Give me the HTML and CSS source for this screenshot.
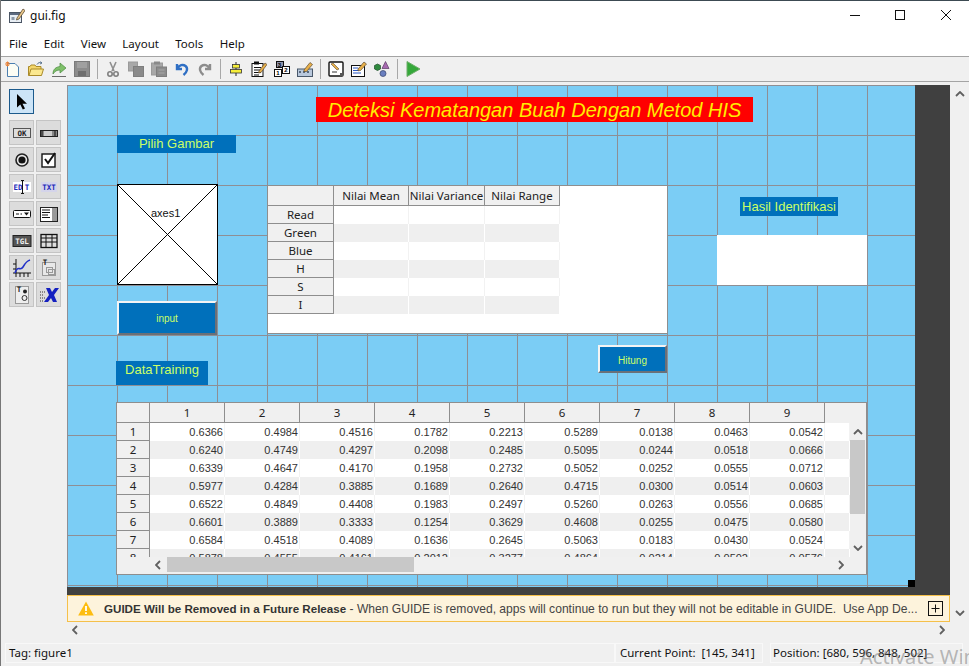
FILE: index.html
```html
<!DOCTYPE html>
<html>
<head>
    <title>gui.fig</title>
    <meta http-equiv="Content-Type" content="text/html; charset=utf-8" />
    <link rel="stylesheet" href="styles.css">
</head>

<body>
<div class="window">
    <!-- Title bar -->
    <div class="titlebar">
        <svg class="app-icon" viewBox="0 0 16 16" width="16" height="16">
            <rect x="0.5" y="4.5" width="12" height="10" fill="#e8eef4" stroke="#4a5564"/>
            <rect x="1" y="5" width="11" height="2" fill="#5c6a80"/>
            <rect x="2.5" y="9" width="3" height="3" fill="#8a98a8"/>
            <path d="M8 10 L14 1 L16 2.5 L10 11 L7.5 12 Z" fill="#e9c78a" stroke="#5b4a32" stroke-width="0.8"/>
        </svg>
        <span class="title-text">gui.fig</span>
        <div class="win-controls">
            <svg viewBox="0 0 10 10" width="10" height="10" class="win-min"><path d="M0 5.5H10" stroke="#111" fill="none"/></svg>
            <svg viewBox="0 0 10 10" width="10" height="10" class="win-max"><rect x="0.5" y="0.5" width="9" height="9" stroke="#111" fill="none"/></svg>
            <svg viewBox="0 0 10 10" width="10" height="10" class="win-close"><path d="M0 0L10 10M10 0L0 10" stroke="#111" fill="none"/></svg>
        </div>
    </div>

    <!-- Menu -->
    <div class="menubar">
        <span>File</span>
        <span>Edit</span>
        <span>View</span>
        <span>Layout</span>
        <span>Tools</span>
        <span>Help</span>
    </div>

    <!-- Toolbar -->
    <div class="toolbar">
        <span class="tool"><svg viewBox="0 0 16 16"><path d="M2.5 2.5H10L13.5 6V15.5H2.5Z" fill="#fdfdf4" stroke="#4c7fb0"/><path d="M0 3H5M2.5 0.5V5.5M1 1L4 5M4 1L1 5" stroke="#e8833a"/></svg></span>
        <span class="tool"><svg viewBox="0 0 16 16"><path d="M0.5 14.5V5.5H2L3 4H7L8 5.5H13V14.5Z" fill="#f4d66a" stroke="#a98a2a"/><path d="M1 14.5L3 8H15.5L13.5 14.5Z" fill="#fbe88f" stroke="#a98a2a"/><path d="M9 3.5C10 1.5 12 1 14 2M14 2L12.5 0.5M14 2L12 3" stroke="#5c7590" fill="none"/></svg></span>
        <span class="tool"><svg viewBox="0 0 16 16"><path d="M1 15.5H15" stroke="#6a6a6a"/><path d="M2 13C2 8 5 6 9 5.5V2L15 7L9 12V9C6 9 4 10 2 13Z" fill="#7fc06a" stroke="#4b8a40" stroke-width="0.7"/></svg></span>
        <span class="tool"><svg viewBox="0 0 16 16"><rect x="0.5" y="0.5" width="15" height="15" fill="#8c8c8c" stroke="#7a7a7a"/><rect x="3" y="1" width="10" height="6" fill="#a0a0a0"/><rect x="4" y="10" width="8" height="5" fill="#6e6e6e"/></svg></span>
        <span class="tool-sep"></span>
        <span class="tool"><svg viewBox="0 0 16 16"><path d="M5 1L9 10M11 1L7 10" stroke="#8f8f8f" stroke-width="1.6" fill="none"/><circle cx="5" cy="13" r="2.2" fill="none" stroke="#808080" stroke-width="1.6"/><circle cx="11" cy="13" r="2.2" fill="none" stroke="#808080" stroke-width="1.6"/></svg></span>
        <span class="tool"><svg viewBox="0 0 16 16"><rect x="0.5" y="1" width="9" height="9" fill="#a8a8a8" stroke="#9a9a9a"/><rect x="5.5" y="5.5" width="10" height="10" fill="#8a8a8a" stroke="#7e7e7e"/></svg></span>
        <span class="tool"><svg viewBox="0 0 16 16"><rect x="0.5" y="2" width="11" height="12" fill="#a8a8a8" stroke="#9a9a9a"/><rect x="3" y="0.5" width="6" height="3" fill="#8a8a8a"/><rect x="5.5" y="6" width="10" height="9.5" fill="#8c8c8c" stroke="#7e7e7e"/><path d="M7.5 9H13.5M7.5 12H13.5" stroke="#a8a8a8"/></svg></span>
        <span class="tool"><svg viewBox="0 0 16 16"><path d="M3 3V8H8M3.5 7.5C5 4 9 3 11.5 5C14 7 13.5 11 9.5 14" fill="none" stroke="#2f6fc4" stroke-width="2.4"/></svg></span>
        <span class="tool"><svg viewBox="0 0 16 16"><path d="M13 3V8H8M12.5 7.5C11 4 7 3 4.5 5C2 7 2.5 11 6.5 14" fill="none" stroke="#8c8c8c" stroke-width="2.4"/></svg></span>
        <span class="tool-sep"></span>
        <span class="tool"><svg viewBox="0 0 16 16"><path d="M8 1V15" stroke="#222"/><rect x="4.5" y="3.5" width="7" height="3.5" fill="#f6ee3a" stroke="#333" stroke-width="0.8"/><rect x="2.5" y="8.5" width="11" height="3.5" fill="#f6ee3a" stroke="#333" stroke-width="0.8"/></svg></span>
        <span class="tool"><svg viewBox="0 0 16 16"><rect x="1" y="2.5" width="11" height="13" fill="#fff" stroke="#111"/><rect x="3" y="0.5" width="5" height="3" fill="#111"/><path d="M3 6.5H10M3 9H10M3 11.5H10M3 14H8" stroke="#111"/><path d="M8 10L14 2L16 3.5L10 11.5L7.5 12Z" fill="#e8b04a" stroke="#5b4a32" stroke-width="0.7"/></svg></span>
        <span class="tool"><svg viewBox="0 0 16 16"><rect x="2.5" y="0.5" width="7" height="6" fill="#8c93ad" stroke="#111"/><rect x="0.5" y="8.5" width="7" height="7" fill="#fff" stroke="#111"/><rect x="8.5" y="5.5" width="7" height="7" fill="#fff" stroke="#111"/><text x="4" y="14.3" class="tiny">1</text><text x="12" y="11.3" class="tiny">2</text><text x="5.5" y="5.8" class="tiny">3</text></svg></span>
        <span class="tool"><svg viewBox="0 0 16 16"><rect x="0.5" y="8" width="15" height="7.5" fill="#b9c8dc" stroke="#49586a"/><path d="M2 11H4M6 11H8M10 11H12" stroke="#3a4a5c" stroke-width="1.6"/><path d="M7 9L13 1.5L15.5 3.5L9.5 10.5L7 10.5Z" fill="#e8b04a" stroke="#5b4a32" stroke-width="0.7"/></svg></span>
        <span class="tool-sep"></span>
        <span class="tool"><svg viewBox="0 0 16 16"><rect x="1" y="1" width="14" height="14" rx="1" fill="#fff" stroke="#111" stroke-width="1.4"/><path d="M3 3L9 9L11 8L5 2Z" fill="#e8b04a" stroke="#5b4a32" stroke-width="0.6"/><path d="M4 11H9" stroke="#333"/><rect x="12" y="12" width="3" height="3" fill="#555"/></svg></span>
        <span class="tool"><svg viewBox="0 0 16 16"><rect x="0.5" y="4.5" width="13" height="11" fill="#fff" stroke="#111"/><path d="M2 7H7M2 9.5H8M2 12H10" stroke="#2b58c4"/><path d="M7 8L13 1L15.5 3L9.5 9.5L7 9.8Z" fill="#e8b04a" stroke="#5b4a32" stroke-width="0.7"/></svg></span>
        <span class="tool"><svg viewBox="0 0 16 16"><path d="M3.5 3L6.5 4.5V8L3.5 9.5L0.5 8V4.5Z" fill="#2f8a3e" stroke="#1e4d28" stroke-width="0.7"/><path d="M11.5 0.5L15 7.5H8Z" fill="#a669b0" stroke="#5c3a66" stroke-width="0.7"/><circle cx="9" cy="12.5" r="3" fill="#6a7fc0" stroke="#36436a" stroke-width="0.7"/></svg></span>
        <span class="tool-sep"></span>
        <span class="tool"><svg viewBox="0 0 16 16"><path d="M2 0.5L15 8L2 15.5Z" fill="#35a83a" stroke="#6fae6a"/></svg></span>
    </div>

    <div class="workspace">
        <!-- Component palette -->
        <div class="palette">
            <div class="pal-select">
                <svg viewBox="0 0 16 18" width="16" height="18"><path d="M3 1V14.5L6.3 11.5L8.8 16.5L11 15.5L8.5 10.8H13Z" fill="#000"/></svg>
            </div>
            <div class="pal-grid">
                <span class="pal-btn"><svg viewBox="0 0 20 20"><rect x="1.5" y="5.5" width="17" height="9" fill="#ddd" stroke="#555"/><text x="10" y="13" class="pal-text">OK</text></svg></span>
                <span class="pal-btn"><svg viewBox="0 0 20 20"><rect x="1.5" y="7.5" width="17" height="6" fill="#888" stroke="#222"/><rect x="5" y="8" width="8" height="5" fill="#ccc"/><path d="M3 8V13M16 8V13" stroke="#111"/></svg></span>
                <span class="pal-btn"><svg viewBox="0 0 20 20"><circle cx="10" cy="10" r="6" fill="#e8e8e8" stroke="#222" stroke-width="1.6"/><circle cx="10" cy="10" r="3.6" fill="#111"/></svg></span>
                <span class="pal-btn"><svg viewBox="0 0 20 20"><rect x="3" y="4" width="13" height="13" fill="#fff" stroke="#111" stroke-width="1.4"/><path d="M6 9L9 13L16 3" fill="none" stroke="#111" stroke-width="2"/></svg></span>
                <span class="pal-btn"><svg viewBox="0 0 20 20"><rect x="1" y="5" width="18" height="10" fill="#fff"/><text x="6" y="13" class="pal-text blue">ED</text><text x="15" y="13" class="pal-text blue">T</text><path d="M10.5 3.5V16.5M9 3.5H12M9 16.5H12" stroke="#111"/></svg></span>
                <span class="pal-btn"><svg viewBox="0 0 20 20"><rect x="2" y="5" width="16" height="10" fill="#d4d4ea"/><text x="10" y="13" class="pal-text blue">TXT</text></svg></span>
                <span class="pal-btn"><svg viewBox="0 0 20 20"><rect x="1.5" y="6.5" width="17" height="7" rx="1" fill="#fff" stroke="#111"/><path d="M4 10H7M8.5 10H10" stroke="#111"/><path d="M12 8.5H17L14.5 11.5Z" fill="#111"/></svg></span>
                <span class="pal-btn"><svg viewBox="0 0 20 20"><rect x="1.5" y="3.5" width="17" height="14" fill="#fff" stroke="#222"/><path d="M3 6H11M3 8.5H11M3 11H9M3 13.5H11" stroke="#111"/><rect x="13" y="4" width="5" height="13" fill="#999"/></svg></span>
                <span class="pal-btn"><svg viewBox="0 0 20 20"><rect x="1" y="4.5" width="18" height="11" fill="#555" stroke="#222"/><text x="10" y="13" class="pal-text light">TGL</text></svg></span>
                <span class="pal-btn"><svg viewBox="0 0 20 20"><rect x="2" y="3.5" width="16" height="13" fill="#ddd" stroke="#111" stroke-width="1.3"/><path d="M2 7H18M2 11H18M7 3.5V16.5M13 3.5V16.5" stroke="#111"/></svg></span>
                <span class="pal-btn"><svg viewBox="0 0 20 20"><path d="M4 1V19M1 15H19M1 11H4M1 6H4M8 15V19M12 15V19M16 15V19" stroke="#111"/><path d="M3 15C6 6 8 14 11 9S15 3 18 2" fill="none" stroke="#2230c8" stroke-width="1.6"/></svg></span>
                <span class="pal-btn"><svg viewBox="0 0 20 20"><rect x="3.5" y="4.5" width="13" height="13" fill="#e8e8e8" stroke="#999"/><text x="6" y="7" class="pal-text">T</text><rect x="7.5" y="9.5" width="6" height="5" fill="none" stroke="#999"/><rect x="9.5" y="11.5" width="6" height="5" fill="none" stroke="#999"/></svg></span>
                <span class="pal-btn"><svg viewBox="0 0 20 20"><rect x="3.5" y="1.5" width="13" height="17" fill="#eee" stroke="#999"/><text x="7" y="7" class="pal-text">T</text><circle cx="13" cy="6.5" r="2" fill="#222"/><circle cx="12.5" cy="13" r="2.5" fill="#eee" stroke="#333"/></svg></span>
                <span class="pal-btn"><svg viewBox="0 0 20 20"><path d="M1 7H6M1 10H5M1 13H6M1 16H5" stroke="#333" stroke-dasharray="1 1"/><path d="M7 3H11L13 7L16 3H20L15 10L18 17H14L12 13L9 17H5L10 10Z" fill="#1420c0"/></svg></span>
            </div>
        </div>

        <!-- Layout editor -->
        <div class="editor">
            <div class="design-area">
                <div class="design-back">
                    <div class="canvas">
                        <div class="w-title">Deteksi Kematangan Buah Dengan Metod HIS</div>
                        <div class="w-label w-pilih">Pilih Gambar</div>

                        <div class="w-axes">
                            <svg viewBox="0 0 100 100" preserveAspectRatio="none"><path d="M0 0L100 100M100 0L0 100" stroke="#000" stroke-width="1" fill="none"/></svg>
                            <span class="axes-name">axes1</span>
                        </div>

                        <div class="w-button w-input">input</div>

                        <div class="w-table-small">
                            <table class="sheet small-sheet">
                                <colgroup><col class="c-rowhead"><col class="c-col"><col class="c-wide"><col class="c-col"></colgroup>
                                <tr><th class="corner"></th><th>Nilai Mean</th><th>Nilai Variance</th><th>Nilai Range</th></tr>
                                <tr><th>Read</th><td></td><td></td><td></td></tr>
                                <tr><th>Green</th><td></td><td></td><td></td></tr>
                                <tr><th>Blue</th><td></td><td></td><td></td></tr>
                                <tr><th>H</th><td></td><td></td><td></td></tr>
                                <tr><th>S</th><td></td><td></td><td></td></tr>
                                <tr><th>I</th><td></td><td></td><td></td></tr>
                            </table>
                        </div>

                        <div class="w-label w-hasil">Hasil Identifikasi</div>
                        <div class="w-result"></div>
                        <div class="w-label w-datatraining">DataTraining</div>
                        <div class="w-button w-hitung">Hitung</div>

                        <div class="w-table-data">
                            <div class="data-view">
                                <table class="sheet data-sheet">
                                    <colgroup><col class="c-num"><col class="c-col"><col class="c-col"><col class="c-col"><col class="c-col"><col class="c-col"><col class="c-col"><col class="c-col"><col class="c-col"><col class="c-col"><col class="c-fill"></colgroup>
                                    <tr><th class="corner"></th><th>1</th><th>2</th><th>3</th><th>4</th><th>5</th><th>6</th><th>7</th><th>8</th><th>9</th><th class="fill"></th></tr>
                                    <tr><th>1</th><td>0.6366</td><td>0.4984</td><td>0.4516</td><td>0.1782</td><td>0.2213</td><td>0.5289</td><td>0.0138</td><td>0.0463</td><td>0.0542</td><td></td></tr>
                                    <tr><th>2</th><td>0.6240</td><td>0.4749</td><td>0.4297</td><td>0.2098</td><td>0.2485</td><td>0.5095</td><td>0.0244</td><td>0.0518</td><td>0.0666</td><td></td></tr>
                                    <tr><th>3</th><td>0.6339</td><td>0.4647</td><td>0.4170</td><td>0.1958</td><td>0.2732</td><td>0.5052</td><td>0.0252</td><td>0.0555</td><td>0.0712</td><td></td></tr>
                                    <tr><th>4</th><td>0.5977</td><td>0.4284</td><td>0.3885</td><td>0.1689</td><td>0.2640</td><td>0.4715</td><td>0.0300</td><td>0.0514</td><td>0.0603</td><td></td></tr>
                                    <tr><th>5</th><td>0.6522</td><td>0.4849</td><td>0.4408</td><td>0.1983</td><td>0.2497</td><td>0.5260</td><td>0.0263</td><td>0.0556</td><td>0.0685</td><td></td></tr>
                                    <tr><th>6</th><td>0.6601</td><td>0.3889</td><td>0.3333</td><td>0.1254</td><td>0.3629</td><td>0.4608</td><td>0.0255</td><td>0.0475</td><td>0.0580</td><td></td></tr>
                                    <tr><th>7</th><td>0.6584</td><td>0.4518</td><td>0.4089</td><td>0.1636</td><td>0.2645</td><td>0.5063</td><td>0.0183</td><td>0.0430</td><td>0.0524</td><td></td></tr>
                                    <tr><th>8</th><td>0.5878</td><td>0.4555</td><td>0.4161</td><td>0.2012</td><td>0.3277</td><td>0.4864</td><td>0.0214</td><td>0.0502</td><td>0.0576</td><td></td></tr>
                                </table>
                            </div>
                            <div class="data-vscroll">
                                <svg class="chev up" viewBox="0 0 10 6"><path d="M1 5L5 1L9 5"/></svg>
                                <div class="v-thumb"></div>
                                <svg class="chev down" viewBox="0 0 10 6"><path d="M1 1L5 5L9 1"/></svg>
                            </div>
                            <div class="data-hscroll">
                                <svg class="chev-h left" viewBox="0 0 6 10"><path d="M5 1L1 5L5 9"/></svg>
                                <div class="h-thumb"></div>
                                <svg class="chev-h right" viewBox="0 0 6 10"><path d="M1 1L5 5L1 9"/></svg>
                            </div>
                        </div>

                        <span class="resize-handle"></span>
                    </div>
                </div>
            </div>

            <!-- Warning banner -->
            <div class="banner">
                <svg class="warn-icon" viewBox="0 0 16 15" width="16" height="15"><path d="M8 0.5L15.8 14.5H0.2Z" fill="#fdbd10"/><path d="M8 5V10M8 11.3V13" stroke="#fff" stroke-width="1.8"/></svg>
                <span class="banner-text"><b>GUIDE Will be Removed in a Future Release</b> - When GUIDE is removed, apps will continue to run but they will not be editable in GUIDE.&nbsp; Use App De...</span>
                <span class="banner-plus">
                    <svg viewBox="0 0 15 15" width="15" height="15"><rect x="0.5" y="0.5" width="14" height="14" fill="none" stroke="#111"/><path d="M3.5 7.5H11.5M7.5 3.5V11.5" stroke="#111"/></svg>
                </span>
            </div>
            <div class="hscroll-row">
                <svg class="chev-h" viewBox="0 0 6 10"><path d="M5 1L1 5L5 9"/></svg>
                <svg class="chev-h" viewBox="0 0 6 10"><path d="M1 1L5 5L1 9"/></svg>
            </div>
        </div>

        <div class="side-scroll">
            <svg class="chev" viewBox="0 0 10 6"><path d="M1 5L5 1L9 5"/></svg>
            <svg class="chev" viewBox="0 0 10 6"><path d="M1 1L5 5L9 1"/></svg>
        </div>
    </div>

    <!-- Status bar -->
    <div class="statusbar">
        <span class="st-panel st-tag">Tag: figure1</span>
        <span class="st-panel st-point">Current Point:&nbsp; [145, 341]</span>
        <span class="st-panel st-pos">Position: [680, 596, 848, 502]</span>
    </div>
    <span class="watermark">Activate Win</span>
</div>
</body>

</html>
```

FILE: styles.css
```css
html, body {
    margin: 0;
    padding: 0;
    height: 666px;
    overflow: hidden;
}

body {
    background-color: #f0f0f0;
    color: #111;
    font-family: "Noto Sans", "Liberation Sans", sans-serif;
    font-size: 11.5px;
}

svg {
    display: block;
}

.window {
    position: relative;
    width: 969px;
    height: 666px;
    overflow: hidden;
    box-sizing: border-box;
    border-left: 1px solid #777;
    display: flex;
    flex-direction: column;
}

/* title bar */
.titlebar {
    height: 29px;
    flex: none;
    background-color: #fff;
    border-top: 1px solid #3c4a52;
    display: flex;
    align-items: center;
    padding-left: 8px;
}

.app-icon {
    margin-right: 5px;
}

.title-text {
    font-size: 12px;
}

.win-controls {
    margin-left: auto;
    display: flex;
    align-items: center;
    margin-right: 18px;
    margin-top: -1px;
}

.win-min {
    margin-right: 35px;
}

.win-max {
    margin-right: 36px;
}

/* menu */
.menubar {
    height: 26px;
    flex: none;
    background-color: #fff;
    border-bottom: 1px solid #a4a4a4;
    display: flex;
    align-items: center;
    gap: 16.4px;
    padding-left: 8px;
    font-size: 11.5px;
}

/* toolbar */
.toolbar {
    height: 24px;
    flex: none;
    background-color: #f0f0f0;
    border-bottom: 1px solid #a4a4a4;
    display: flex;
    align-items: center;
}

.tool {
    width: 23px;
    display: flex;
    justify-content: center;
}

.tool svg {
    width: 16px;
    height: 16px;
}

.tool-sep {
    width: 1px;
    height: 20px;
    margin: 0 3px 0 4px;
    background-color: #a8a8a8;
}

.tiny {
    font-family: "Liberation Sans", sans-serif;
    font-size: 6px;
    text-anchor: middle;
    font-weight: bold;
}

.workspace {
    height: 560px;
    flex: none;
    display: flex;
}

/* palette */
.palette {
    width: 66px;
    flex: none;
    padding: 7px 0 0 8px;
    box-sizing: border-box;
}

.pal-select {
    width: 25px;
    height: 25px;
    box-sizing: border-box;
    border: 1px solid #1c5a8c;
    background-color: #cce4f7;
    display: flex;
    align-items: center;
    justify-content: center;
}

.pal-grid {
    margin-top: 6px;
    display: grid;
    grid-template-columns: 25px 25px;
    grid-auto-rows: 25px;
    gap: 2px;
}

.pal-btn {
    box-sizing: border-box;
    border: 1px solid #c4c4c4;
    background-color: #dcdcdc;
    display: flex;
    align-items: center;
    justify-content: center;
}

.pal-btn svg {
    width: 20px;
    height: 20px;
}

.pal-text {
    font-family: "DejaVu Sans Mono", monospace;
    font-size: 7.5px;
    font-weight: bold;
    text-anchor: middle;
    fill: #222;
}

.pal-text.blue {
    fill: #2228b8;
}

.pal-text.light {
    fill: #eee;
}

/* editor area */
.editor {
    width: 883px;
    flex: none;
    display: flex;
    flex-direction: column;
}

.design-area {
    height: 513px;
    flex: none;
    box-sizing: border-box;
    padding-top: 3px;
}

.design-back {
    height: 510px;
    background-color: #404040;
}

.canvas {
    position: relative;
    width: 848px;
    height: 502px;
    background-color: #7bcdf5;
    background-image:
        linear-gradient(to right, #8e8e94 1px, transparent 1px),
        linear-gradient(to bottom, #8e8e94 1px, transparent 1px);
    background-size: 50px 50px;
    font-family: "Liberation Sans", sans-serif;
}

.w-title {
    position: absolute;
    left: 249px;
    top: 12px;
    width: 437px;
    height: 25px;
    line-height: 27px;
    background-color: #ff0000;
    color: #ffee00;
    font-size: 20px;
    font-style: italic;
    text-align: center;
}

.w-label {
    position: absolute;
    background-color: #0070bb;
    color: #ccff66;
    text-align: center;
}

.w-pilih {
    left: 50px;
    top: 50px;
    width: 119px;
    height: 18px;
    line-height: 18px;
    font-size: 13px;
}

.w-hasil {
    left: 673px;
    top: 112px;
    width: 98px;
    height: 19px;
    line-height: 19px;
    font-size: 13px;
}

.w-datatraining {
    left: 49px;
    top: 276px;
    width: 92px;
    height: 24px;
    line-height: 18px;
    font-size: 13px;
}

.w-axes {
    position: absolute;
    left: 50px;
    top: 99px;
    width: 99px;
    height: 99px;
    background-color: #fff;
    border: 1px solid #000;
}

.w-axes svg {
    width: 100%;
    height: 100%;
}

.axes-name {
    position: absolute;
    left: 33px;
    top: 22px;
    font-size: 11px;
    color: #111;
}

.w-button {
    position: absolute;
    box-sizing: border-box;
    background-color: #0070bb;
    color: #ccff66;
    font-size: 10px;
    text-align: center;
    border: 2px solid;
    border-color: #f4f4f4 #6a7078 #6a7078 #f4f4f4;
}

.w-input {
    left: 50px;
    top: 216px;
    width: 100px;
    height: 34px;
    line-height: 32px;
}

.w-hitung {
    left: 531px;
    top: 260px;
    width: 69px;
    height: 28px;
    line-height: 27px;
}

.w-result {
    position: absolute;
    left: 650px;
    top: 150px;
    width: 150px;
    height: 50px;
    background-color: #fff;
}

.w-table-small {
    position: absolute;
    left: 200px;
    top: 100px;
    width: 399px;
    height: 147px;
    background-color: #fff;
    border: 1px solid #8e8e8e;
}

/* uitable */
.sheet {
    border-collapse: separate;
    border-spacing: 0;
    table-layout: fixed;
    font-family: "Noto Sans", "Liberation Sans", sans-serif;
    font-size: 11.5px;
}

.sheet th {
    box-sizing: border-box;
    height: 18px;
    padding: 0;
    font-weight: normal;
    text-align: center;
    background-color: #f0f0f0;
    color: #222;
    border-right: 1px solid #8e8e8e;
    border-bottom: 1px solid #8e8e8e;
    overflow: hidden;
    white-space: nowrap;
}

.sheet tr:first-child th {
    height: 20px;
}

.sheet th.fill {
    border-right: none;
    border-bottom: none;
}

.sheet td {
    box-sizing: border-box;
    height: 18px;
    padding: 0 1px 0 0;
    text-align: right;
    font-family: "Liberation Sans", sans-serif;
    font-size: 11px;
    color: #333;
    background-color: #fff;
    border-right: 1px solid #f2f2f2;
}

.sheet tr:nth-child(odd) td {
    background-color: #efefef;
    border-right-color: #fff;
}

.small-sheet {
    width: 292px;
}

.data-sheet {
    width: 733px;
}

.c-rowhead {
    width: 66px;
}

.c-col {
    width: 75px;
}

.c-wide {
    width: 76px;
}

.c-num {
    width: 33px;
}

.c-fill {
    width: 25px;
}

.w-table-data {
    position: absolute;
    left: 49px;
    top: 317px;
    width: 751px;
    height: 173px;
    box-sizing: border-box;
    border: 1px solid #8e8e8e;
    background-color: #f0f0f0;
    display: grid;
    grid-template-columns: 733px 16px;
    grid-template-rows: 154px 17px;
}

.data-view {
    grid-column: 1;
    grid-row: 1;
    overflow: hidden;
}

.data-vscroll {
    position: relative;
    grid-column: 2;
    grid-row: 1;
}

.v-thumb {
    position: absolute;
    left: 0;
    top: 37px;
    width: 15px;
    height: 74px;
    background-color: #c8c8c8;
}

.data-vscroll .chev {
    position: absolute;
    left: 3px;
}

.chev.up {
    top: 26px;
}

.chev.down {
    top: 142px;
}

.data-hscroll {
    position: relative;
    grid-column: 1 / 3;
    grid-row: 2;
}

.h-thumb {
    position: absolute;
    left: 50px;
    top: 0;
    width: 247px;
    height: 15px;
    background-color: #c8c8c8;
}

.data-hscroll .chev-h {
    position: absolute;
    top: 3px;
}

.chev-h.left {
    left: 38px;
}

.chev-h.right {
    left: 721px;
}

.chev {
    width: 10px;
    height: 6px;
}

.chev-h {
    width: 6px;
    height: 10px;
}

.chev path, .chev-h path {
    fill: none;
    stroke: #606060;
    stroke-width: 1.8;
}

.resize-handle {
    position: absolute;
    right: 0;
    bottom: 0;
    width: 7px;
    height: 7px;
    background-color: #000;
}

/* banner */
.banner {
    height: 27px;
    flex: none;
    box-sizing: border-box;
    background-color: #fdf3dc;
    border: 1px solid #f5c04a;
    display: flex;
    align-items: center;
    padding-left: 10px;
    font-family: "Liberation Sans", sans-serif;
    font-size: 12.1px;
    color: #444;
}

.banner-text {
    margin-left: 10px;
    white-space: nowrap;
    overflow: hidden;
}

.banner-text b {
    color: #333;
    font-size: 11.6px;
}

.banner-plus {
    margin-left: auto;
    margin-right: 6px;
}

.hscroll-row {
    flex: 1;
    display: flex;
    justify-content: space-between;
    align-items: center;
    padding: 0 5px 4px 5px;
}

.side-scroll {
    width: 19px;
    height: 539px;
    flex: none;
    box-sizing: border-box;
    padding: 9px 0 5px 5px;
    display: flex;
    flex-direction: column;
    justify-content: space-between;
}

/* status bar */
.statusbar {
    flex: 1;
    display: flex;
    align-items: flex-start;
    padding-top: 1px;
    font-size: 11.5px;
}

.st-panel {
    box-sizing: border-box;
    height: 20px;
    line-height: 18px;
    border: 1px solid #f8f8f8;
    white-space: nowrap;
}

.st-tag {
    margin-left: 4px;
    width: 610px;
    padding-left: 3px;
}

.st-point {
    width: 148px;
    padding-left: 4px;
    margin-right: 7px;
}

.st-pos {
    width: 193px;
    padding-left: 2px;
}

.watermark {
    position: absolute;
    left: 859px;
    top: 643px;
    font-size: 20px;
    color: rgba(120, 120, 120, 0.5);
    white-space: nowrap;
}
```
